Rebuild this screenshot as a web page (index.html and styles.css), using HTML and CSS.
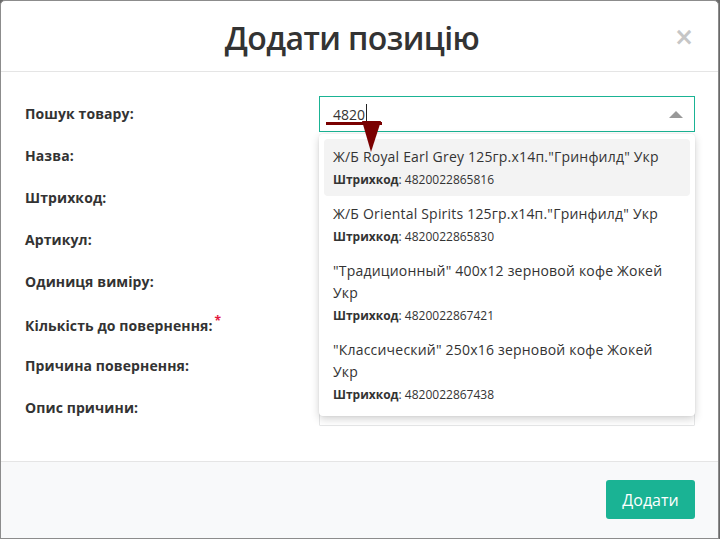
FILE: index.html
```html
<!DOCTYPE html>
<html lang="uk">
<head>
  <meta charset="UTF-8" />
  <meta name="viewport" content="width=device-width, initial-scale=1.0">
  <title>Додати позицію</title>
  <link rel="stylesheet" href="styles.css">
</head>
<body>

  <div class="modal">
    <div class="modal-header">
      <h2>Додати позицію</h2>
      <button class="close" title="Закрити">×</button>
    </div>

    <div class="modal-body">
      <div class="row">
        <label>Пошук товару:</label>
        <div class="field">
          <div class="select open">
            <span class="value">4820</span><span class="caret"></span>
            <span class="arrow-up"></span>
          </div>

          <div class="dropdown">
            <div class="option active">
              <div class="name">Ж/Б Royal Earl Grey 125гр.х14п."Гринфилд" Укр</div>
              <div class="code"><b>Штрихкод</b>: 4820022865816</div>
            </div>
            <div class="option">
              <div class="name">Ж/Б Oriental Spirits 125гр.х14п."Гринфилд" Укр</div>
              <div class="code"><b>Штрихкод</b>: 4820022865830</div>
            </div>
            <div class="option">
              <div class="name">"Традиционный" 400х12 зерновой кофе Жокей Укр</div>
              <div class="code"><b>Штрихкод</b>: 4820022867421</div>
            </div>
            <div class="option">
              <div class="name">"Классический" 250х16 зерновой кофе Жокей Укр</div>
              <div class="code"><b>Штрихкод</b>: 4820022867438</div>
            </div>
          </div>

          <svg class="pointer" width="60" height="36" viewBox="0 0 60 36">
            <rect x="0" y="1" width="56" height="3" fill="#7a0000" />
            <polygon points="36,0 55,0 45,31" fill="#7a0000" />
          </svg>
        </div>
      </div>

      <div class="row"><label>Назва:</label><div class="field"><input type="text"></div></div>
      <div class="row"><label>Штрихкод:</label><div class="field"><input type="text"></div></div>
      <div class="row"><label>Артикул:</label><div class="field"><input type="text"></div></div>
      <div class="row"><label>Одиниця виміру:</label><div class="field"><input type="text"></div></div>
      <div class="row"><label>Кількість до повернення:<sup class="req">*</sup></label><div class="field"><input type="text"></div></div>
      <div class="row"><label>Причина повернення:</label><div class="field"><input type="text"></div></div>
      <div class="row"><label>Опис причини:</label><div class="field"><input type="text"></div></div>
    </div>

    <div class="modal-footer">
      <button class="btn-primary">Додати</button>
    </div>
  </div>

</body>
</html>
```

FILE: styles.css
```css
body {
  margin: 0;
  background: #6a6a6a;
  font-family: 'Open Sans', 'Noto Sans', sans-serif;
  color: #333;
}

.modal {
  width: 717px;
  height: 537px;
  background: #fff;
  border: 1px solid #8c8c8c;
  border-radius: 5px 5px 0 0;
  display: flex;
  flex-direction: column;
  overflow: hidden;
}

.modal-header {
  height: 70px;
  border-bottom: 1px solid #e5e5e5;
  display: flex;
  align-items: center;
  justify-content: center;
  padding-right: 15px;
  position: relative;
}

.modal-header h2 {
  margin: 0;
  font-size: 32px;
  font-weight: 600;
  color: #333;
  letter-spacing: -0.6px;
  padding-top: 2px;
}

.close {
  position: absolute;
  right: 24px;
  top: 22px;
  background: transparent;
  border: none;
  padding: 0;
  font-size: 24px;
  font-weight: 700;
  line-height: 28px;
  color: #c6c6c6;
  font-family: 'DejaVu Sans', sans-serif;
  cursor: pointer;
}

.modal-body {
  flex: 1;
  padding: 24px 23px 0 24px;
  display: flex;
  flex-direction: column;
  gap: 6px;
}

.row {
  display: grid;
  grid-template-columns: 294px 1fr;
  align-items: center;
  height: 36px;
}

.row label {
  font-size: 14px;
  font-weight: 700;
  color: #333;
  letter-spacing: 0.1px;
  margin-top: -2px;
}

.req {
  color: #e3173e;
  font-size: 12px;
  margin-left: 2px;
}

.field {
  position: relative;
  height: 36px;
}

.field input {
  width: 100%;
  height: 36px;
  box-sizing: border-box;
  border: 1px solid #e5e6e7;
  border-radius: 1px;
  padding: 6px 12px;
  font-family: inherit;
  font-size: 14px;
  outline: none;
}

.select {
  height: 36px;
  box-sizing: border-box;
  border: 1px solid #1ab394;
  display: flex;
  align-items: center;
  padding-left: 13px;
  font-size: 14px;
  color: #333;
  position: relative;
}

.caret {
  display: inline-block;
  width: 1px;
  height: 23px;
  background: #222;
  margin-left: 1px;
  margin-top: 2px;
}

.arrow-up {
  position: absolute;
  right: 11px;
  top: 14px;
  width: 0;
  height: 0;
  border-left: 7px solid transparent;
  border-right: 7px solid transparent;
  border-bottom: 7px solid #999;
}

.dropdown {
  position: absolute;
  z-index: 10;
  top: 38px;
  left: 0;
  right: 0;
  background: #fff;
  border-radius: 4px;
  padding: 5px;
  box-shadow: 0 3px 8px rgba(0, 0, 0, 0.18), 0 0 2px rgba(0, 0, 0, 0.08);
}

.option {
  padding: 7px 16px 6px 9px;
  border-radius: 4px;
}

.option.active {
  background: #f3f3f3;
}

.option .name {
  font-size: 14px;
  line-height: 22px;
  letter-spacing: 0.2px;
  color: #333;
}

.option .code {
  font-size: 12px;
  line-height: 20px;
  margin-top: 2px;
  color: #333;
}

.pointer {
  position: absolute;
  z-index: 20;
  left: 7px;
  top: 25px;
}

.modal-footer {
  height: 77px;
  border-top: 1px solid #e5e5e5;
  background: #f8f9fa;
  display: flex;
  justify-content: flex-end;
  align-items: flex-start;
  padding: 18px 23px 0 0;
  box-sizing: border-box;
}

.btn-primary {
  background: #1ab394;
  color: #fff;
  border: none;
  border-radius: 3px;
  width: 89px;
  height: 39px;
  font-family: inherit;
  font-size: 16px;
  cursor: pointer;
}
```
